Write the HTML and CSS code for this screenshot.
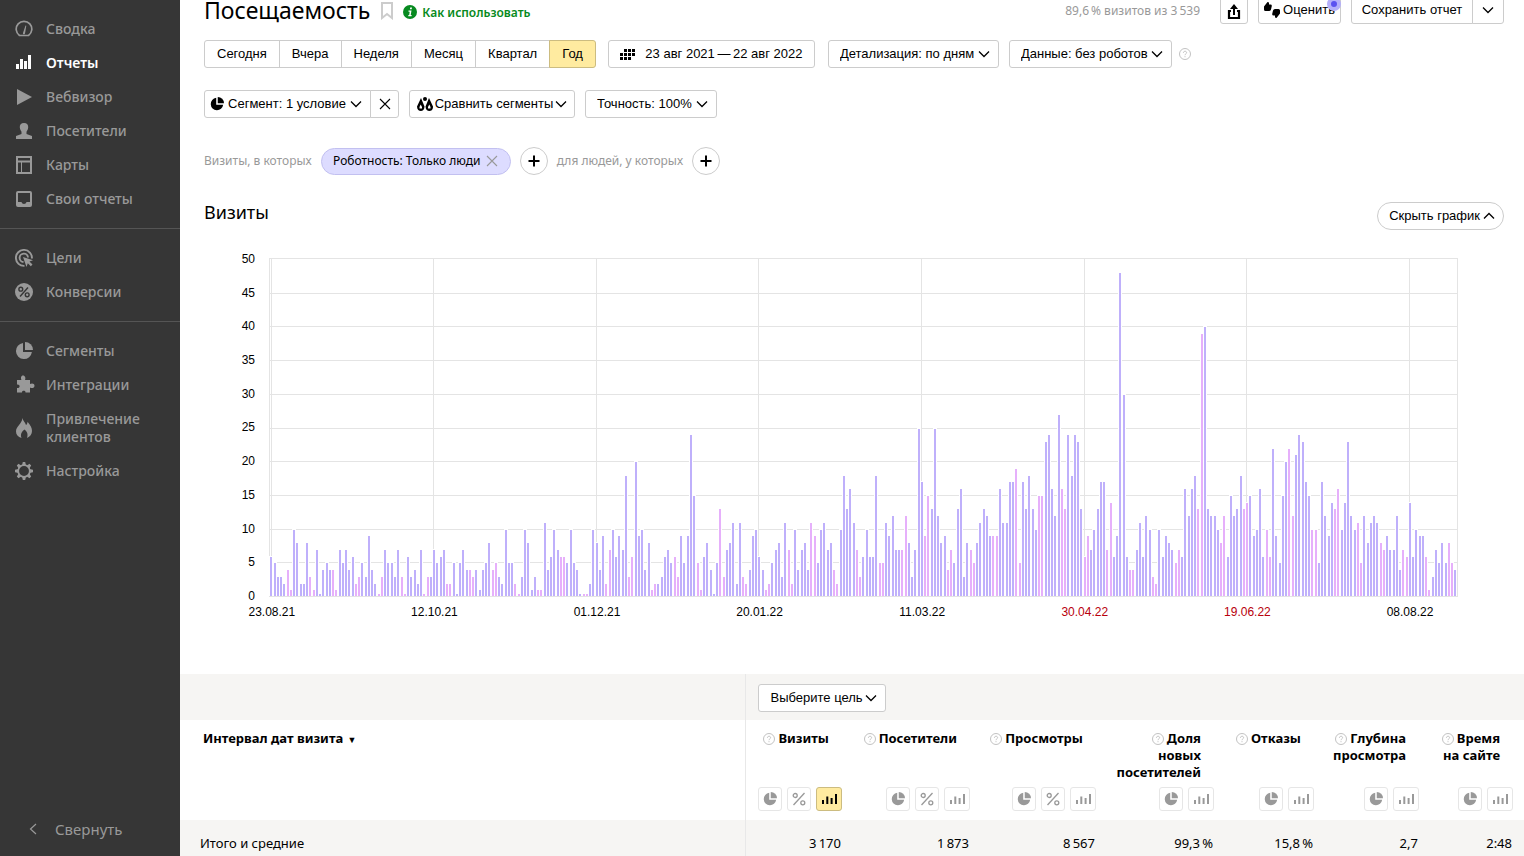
FILE: index.html
```html
<!DOCTYPE html>
<html lang="ru">
<head>
<meta charset="utf-8">
<title>Посещаемость</title>
<link rel="stylesheet" href="styles.css">
</head>
<body>
<svg class="sprite" aria-hidden="true">
  <symbol id="pie" viewBox="0 0 18 18"><path d="M8 1.1V10h8.9A8 8 0 1 1 8 1.1z"/><path d="M10 0a8 8 0 0 1 8 8h-8z"/></symbol>
  <symbol id="bars" viewBox="0 0 16 12"><path d="M1 7h2v4H1zM5.300 3.500h2V11h-2zM9.600 5h2v6h-2zM14 1h2v10h-2z"/></symbol>
  <symbol id="percent" viewBox="0 0 14 14"><g fill="none" stroke="currentColor" stroke-width="1.3"><circle cx="3.200" cy="3.500" r="2"/><circle cx="10.800" cy="10.800" r="2"/><path d="M12.500 1 1.500 13"/></g></symbol>
  <symbol id="down" viewBox="0 0 12 8"><path d="M1 1.500 6 6.500 11 1.500" fill="none" stroke="currentColor" stroke-width="1.300"/></symbol>
  <symbol id="help" viewBox="0 0 12 12"><circle cx="6" cy="6" r="5.500" fill="none" stroke="currentColor" stroke-width=".9"/><path d="M4.400 4.800C4.400 2.700 7.600 2.700 7.600 4.700 7.600 5.800 6 5.900 6 7.200M6 8.200v1" fill="none" stroke="currentColor" stroke-width=".9"/></symbol>
  <symbol id="cross" viewBox="0 0 12 12"><path d="M1 1l10 10M11 1 1 11" fill="none" stroke="currentColor" stroke-width="1.100"/></symbol>
  <symbol id="plus" viewBox="0 0 12 12"><path d="M6 .5v11M.5 6h11" fill="none" stroke="currentColor" stroke-width="2"/></symbol>
</svg>
<div class="app">
  <nav class="sidebar">
    <ul class="menu">
      <li><a href="#"><svg class="mi" viewBox="0 0 18 18"><path d="M4.500 15.500A7.800 7.800 0 1 1 13.500 15.500z" fill="none" stroke="currentColor" stroke-width="1.700" stroke-linejoin="round"/><path d="M10.500 5.500 11.300 5.700 10 13.500C9.500 15 7.500 14.500 8 13z"/></svg>Сводка</a></li>
      <li><a href="#" class="active"><svg class="mi" viewBox="0 0 18 18"><path d="M1 10h3v5H1zM5 5h3v10H5zM9 7h3v8H9zM13 1h3v14h-3z"/></svg>Отчеты</a></li>
      <li><a href="#"><svg class="mi" viewBox="0 0 18 18"><path d="M2 1l15 8-15 8z"/></svg>Вебвизор</a></li>
      <li><a href="#"><svg class="mi" viewBox="0 0 18 18"><path d="M9 1c3 0 4.500 2 4.200 4.500-.2 2-1.200 3.500-1.700 4.200V12l5.500 2v3H1v-3l5.500-2V9.700C6 9 5 7.500 4.800 5.500 4.500 3 6 1 9 1z"/></svg>Посетители</a></li>
      <li><a href="#"><svg class="mi" viewBox="0 0 18 18"><path d="M2 1h14v16H2zM2 5.500h14" fill="none" stroke="currentColor" stroke-width="2"/><path d="M6.500 6v11" fill="none" stroke="currentColor"/></svg>Карты</a></li>
      <li><a href="#"><svg class="mi" viewBox="0 0 18 18"><path fill-rule="evenodd" d="M3 1h12a2 2 0 0 1 2 2v12a2 2 0 0 1-2 2H3a2 2 0 0 1-2-2V3a2 2 0 0 1 2-2zm0 2v9h3.500c.5 2.500 4.500 2.500 5 0H15V3z"/></svg>Свои отчеты</a></li>
    </ul>
    <ul class="menu">
      <li><a href="#"><svg class="mi" viewBox="0 0 18 18"><g fill="none" stroke="currentColor" stroke-width="1.900"><path d="M9.500 16.900A8 8 0 1 1 16.900 9.500"/><path d="M8.500 13A4.200 4.200 0 1 1 13 8.500"/></g><path d="M8 8l10 3.300-3.500 1.200 3 3-1.700 1.700-3-3L11.500 18z"/></svg>Цели</a></li>
      <li><a href="#"><svg class="mi" viewBox="0 0 18 18"><circle cx="9" cy="9" r="9"/><g fill="none" stroke="#363636" stroke-width="1.400"><circle cx="5.800" cy="6.200" r="1.900"/><circle cx="12.200" cy="11.800" r="1.900"/><path d="M13 4.500 5 13.500"/></g></svg>Конверсии</a></li>
    </ul>
    <ul class="menu">
      <li><a href="#"><svg class="mi"><use href="#pie"/></svg>Сегменты</a></li>
      <li><a href="#"><svg class="mi mi-puzzle" viewBox="-1 1 18 18"><path d="M1 5h4.500C4.500 3 5 0.500 7 0.500s3 2.500 2 4.500H14v4c1.500-1 4.500-1 4.500 1.700s-3 2.800-4.500 1.800V17.500H9.500c.5-2.500-4-2.500-3.500 0H1V13c3.500.5 3.500-4 0-3.500z"/></svg>Интеграции</a></li>
      <li><a href="#"><svg class="mi mi-fire" viewBox="0 0 18 20"><path d="M7.500 0c.5 3 2.500 4 3.500 7 1-.8 1.500-2 1.500-3.300C15.500 7 17 10 17 13c0 3.500-2 5.500-5 7 1-3 .8-6-2.500-8.500C7 13.500 5 16 6.500 20 3 19 1 16.500 1 13.500 1 8 7 6 7.500 0z"/></svg>Привлечение клиентов</a></li>
      <li><a href="#"><svg class="mi" viewBox="0 0 18 18"><circle cx="9" cy="9" r="5.800" fill="none" stroke="currentColor" stroke-width="1.700"/><path d="M7.800 0h2.400l.8 3.500H7zM7.800 18h2.400l.8-3.500H7zM0 7.800v2.400l3.500.8V7zM18 7.800v2.400l-3.500.8V7zM1.800 3.500l1.700-1.700 3 1.900-2.800 2.800zM16.200 3.500l-1.700-1.700-3 1.900 2.800 2.800zM1.800 14.500l1.700 1.700 3-1.900-2.800-2.800zM16.200 14.500l-1.700 1.700-3-1.900 2.800-2.800z"/></svg>Настройка</a></li>
    </ul>
    <button class="collapse" type="button"><svg width="8" height="12" viewBox="0 0 8 12"><path d="M7 1 1.500 6 7 11" fill="none" stroke="currentColor" stroke-width="1.200"/></svg>Свернуть</button>
  </nav>

  <main class="content">
    <header class="head">
      <h1>Посещаемость</h1>
      <button class="bookmark" type="button" aria-label="В избранное"><svg width="12" height="18" viewBox="0 0 12 18"><path d="M1 1h10v15L6 12 1 16z" fill="none" stroke="currentColor" stroke-width="2"/></svg></button>
      <a class="howto" href="#"><svg width="14" height="14" viewBox="0 0 14 14"><circle cx="7" cy="7" r="7"/><path d="M7.200 2.500h1.800l-.3 1.700H6.900zM5.500 5.500h3L7.700 10h1l-.2 1.300H5.200l.2-1.300h.8l.5-3.200h-1.200z" fill="#fff"/></svg>Как использовать</a>
      <span class="share-of">89,6&#8201;% визитов из 3&#8201;539</span>
      <div class="head-actions">
        <button class="btn icon-btn" type="button" aria-label="Экспорт"><svg width="14" height="16" viewBox="0 0 14 16"><path d="M4 7H2v7h10V7h-2" fill="none" stroke="currentColor" stroke-width="2.200"/><path d="M6 11h2V5h3L7 0 3 5h3z"/></svg></button>
        <button class="btn rate" type="button"><svg width="16" height="16" viewBox="0 0 16 16"><path d="M0 4.500 3.500 0 5 .5V2.500h1.500q1.500 0 1.300 1.500L7 7.500Q6.500 9 5 9H1.500Q0 9 0 7.500zM16 11.500 12.500 16 11 15.500V13.500H9.500Q8 13.500 8.200 12L9 8.500Q9.500 7 11 7h3.500Q16 7 16 8.500z"/></svg>Оценить<span class="dot"></span></button>
        <div class="group"><button class="btn save" type="button">Сохранить отчет</button><button class="btn more" type="button" aria-label="Ещё"><svg width="12" height="8"><use href="#down"/></svg></button></div>
      </div>
    </header>

    <div class="filters">
      <div class="group">
        <button class="btn" type="button">Сегодня</button><button class="btn" type="button">Вчера</button><button class="btn" type="button">Неделя</button><button class="btn" type="button">Месяц</button><button class="btn" type="button">Квартал</button><button class="btn on" type="button">Год</button>
      </div>
      <button class="btn date" type="button"><svg width="15" height="11" viewBox="0 0 15 11"><path d="M4 0h3v3H4zM8 0h3v3H8zM12 0h3v3h-3zM0 4h3v3H0zM4 4h3v3H4zM8 4h3v3H8zM12 4h3v3h-3zM0 8h3v3H0zM4 8h3v3H4zM8 8h3v3H8z"/></svg>23 авг 2021&#8201;—&#8201;22 авг 2022</button>
      <select class="btn select detail" aria-label="Детализация"><option>Детализация: по дням</option></select>
      <select class="btn select robots" aria-label="Данные"><option>Данные: без роботов</option></select>
      <svg class="help"><use href="#help"/></svg>
    </div>

    <div class="filters segments">
      <div class="group">
        <button class="btn segment" type="button"><svg width="14" height="14"><use href="#pie"/></svg>Сегмент: 1 условие<svg width="12" height="8"><use href="#down"/></svg></button><button class="btn clear" type="button" aria-label="Сбросить"><svg width="12" height="12"><use href="#cross"/></svg></button>
      </div>
      <button class="btn compare" type="button"><svg width="16" height="14" viewBox="0 0 16 14"><path d="M8 0a2 2 0 1 1 0 4 2 2 0 0 1 0-4z"/><path fill-rule="evenodd" d="M4 1 7.500 9.500c.3 6-7.500 6-7.500 0zm-.3 6.500L2.500 10v1.500h2.500V10zM12 1l4 8.500c.3 6-7.500 6-7.500 0zm.3 6.500L11 10v1.500h2.500V10z"/></svg>Сравнить сегменты<svg width="12" height="8"><use href="#down"/></svg></button>
      <select class="btn select accuracy" aria-label="Точность"><option>Точность: 100%</option></select>
    </div>

    <div class="conditions">
      <span>Визиты, в которых</span>
      <button class="chip" type="button">Роботность: Только люди<svg width="12" height="12"><use href="#cross"/></svg></button>
      <button class="add" type="button" aria-label="Добавить условие визита"><svg width="12" height="12"><use href="#plus"/></svg></button>
      <span>для людей, у которых</span>
      <button class="add" type="button" aria-label="Добавить условие для людей"><svg width="12" height="12"><use href="#plus"/></svg></button>
    </div>

    <section class="chart-section">
      <div class="chart-head">
        <h2>Визиты</h2>
        <button class="btn hide" type="button">Скрыть график<svg class="up" width="12" height="8"><use href="#down"/></svg></button>
      </div>
      <div class="chart">
        <ul class="y-axis"><li>50</li><li>45</li><li>40</li><li>35</li><li>30</li><li>25</li><li>20</li><li>15</li><li>10</li><li>5</li><li>0</li></ul>
        <div class="plot-col">
          <svg class="plot" id="plot" viewBox="0 0 1189 339" preserveAspectRatio="none" role="img" aria-label="Визиты по дням"></svg>
          <ul class="x-axis"><li>23.08.21</li><li>12.10.21</li><li>01.12.21</li><li>20.01.22</li><li>11.03.22</li><li class="holiday">30.04.22</li><li class="holiday">19.06.22</li><li>08.08.22</li></ul>
        </div>
      </div>
    </section>

    <table class="report">
      <colgroup><col><col class="c1"><col class="c2"><col class="c3"><col class="c4"><col class="c5"><col class="c6"><col class="c7"></colgroup>
      <thead>
        <tr class="goal-row"><td></td><td colspan="7"><select class="btn select goal" aria-label="Цель"><option>Выберите цель</option></select></td></tr>
        <tr class="names">
          <th scope="col" class="first">Интервал дат визита <span class="sort">▼</span></th>
          <th scope="col"><div class="label"><svg class="help"><use href="#help"/></svg>Визиты</div></th>
          <th scope="col"><div class="label"><svg class="help"><use href="#help"/></svg>Посетители</div></th>
          <th scope="col"><div class="label"><svg class="help"><use href="#help"/></svg>Просмотры</div></th>
          <th scope="col"><div class="label"><svg class="help"><use href="#help"/></svg>Доля<br>новых<br>посетителей</div></th>
          <th scope="col"><div class="label"><svg class="help"><use href="#help"/></svg>Отказы</div></th>
          <th scope="col"><div class="label"><svg class="help"><use href="#help"/></svg>Глубина<br>просмотра</div></th>
          <th scope="col"><div class="label"><svg class="help"><use href="#help"/></svg>Время<br>на сайте</div></th>
        </tr>
        <tr class="modes">
          <td></td>
          <td><div><button type="button" aria-label="Доли"><svg class="pie"><use href="#pie"/></svg></button><button type="button" aria-label="Проценты"><svg class="pct"><use href="#percent"/></svg></button><button type="button" class="wide on" aria-label="График"><svg class="brs"><use href="#bars"/></svg></button></div></td>
          <td><div><button type="button" aria-label="Доли"><svg class="pie"><use href="#pie"/></svg></button><button type="button" aria-label="Проценты"><svg class="pct"><use href="#percent"/></svg></button><button type="button" class="wide" aria-label="График"><svg class="brs"><use href="#bars"/></svg></button></div></td>
          <td><div><button type="button" aria-label="Доли"><svg class="pie"><use href="#pie"/></svg></button><button type="button" aria-label="Проценты"><svg class="pct"><use href="#percent"/></svg></button><button type="button" class="wide" aria-label="График"><svg class="brs"><use href="#bars"/></svg></button></div></td>
          <td><div><button type="button" aria-label="Доли"><svg class="pie"><use href="#pie"/></svg></button><button type="button" class="wide" aria-label="График"><svg class="brs"><use href="#bars"/></svg></button></div></td>
          <td><div><button type="button" aria-label="Доли"><svg class="pie"><use href="#pie"/></svg></button><button type="button" class="wide" aria-label="График"><svg class="brs"><use href="#bars"/></svg></button></div></td>
          <td><div><button type="button" aria-label="Доли"><svg class="pie"><use href="#pie"/></svg></button><button type="button" class="wide" aria-label="График"><svg class="brs"><use href="#bars"/></svg></button></div></td>
          <td><div><button type="button" aria-label="Доли"><svg class="pie"><use href="#pie"/></svg></button><button type="button" class="wide" aria-label="График"><svg class="brs"><use href="#bars"/></svg></button></div></td>
        </tr>
      </thead>
      <tbody>
        <tr class="total"><td>Итого и средние</td><td>3&#8201;170</td><td>1&#8201;873</td><td>8&#8201;567</td><td>99,3&#8201;%</td><td>15,8&#8201;%</td><td>2,7</td><td>2:48</td></tr>
      </tbody>
    </table>
  </main>
</div>
<script src="chart.js"></script>
</body>
</html>
```
FILE: styles.css
```css
* { box-sizing: border-box; }
body { margin: 0; font-family: "Noto Sans", "Open Sans", sans-serif; font-size: 13px; color: #000; background: #fff; }
button, select { font-family: "Liberation Sans", Arial, sans-serif; font-size: 13px; color: #000; margin: 0; }
ul { list-style: none; margin: 0; padding: 0; }
svg { fill: currentColor; flex: none; }
.sprite { position: absolute; width: 0; height: 0; }
.app { display: flex; height: 100vh; overflow: hidden; }

.sidebar { width: 180px; flex: none; background: #363636; display: flex; flex-direction: column; padding-top: 12px; }
.menu { padding-bottom: 12px; }
.menu + .menu { border-top: 1px solid #555; padding-top: 12px; }
.menu a { display: flex; align-items: center; gap: 13px; min-height: 34px; padding: 8px 15px; font-size: 14px; font-weight: 500; line-height: 18px; color: #999; text-decoration: none; }
.menu a.active { color: #fff; font-weight: 600; }
.mi { width: 18px; height: 18px; }
.mi-puzzle { overflow: visible; }
.mi-fire { height: 20px; }
.collapse { display: flex; align-items: center; gap: 18px; margin: auto 0 0; padding: 16px 29px 17px; border: 0; background: none; color: #999; font: 15px/20px "Noto Sans", sans-serif; }

.content { flex: 1; min-width: 0; display: flex; flex-direction: column; }
.head { display: flex; align-items: center; margin-top: -4px; padding: 0 20px 0 24px; height: 28px; }
h1 { margin: 0; font-size: 23px; font-weight: 400; line-height: 28px; }
.bookmark { border: 0; background: none; padding: 4px 0 0; margin-left: 11px; color: #ccc; height: 24px; }
.howto { display: flex; align-items: center; gap: 5px; margin-left: 10px; padding-top: 4px; color: #078a20; font-size: 12px; font-weight: 600; text-decoration: none; }
.share-of { margin-left: auto; color: #999; font-size: 12px; }
.head-actions { display: flex; gap: 10px; margin-left: 20px; }

.btn { display: inline-flex; align-items: center; justify-content: center; gap: 4px; height: 28px; padding: 0 12px; border: 1px solid #ccc; border-radius: 3px; background: #fff; line-height: 16px; white-space: nowrap; }
.group { display: flex; }
.group .btn { border-radius: 0; margin-left: -1px; }
.group .btn:first-child { border-radius: 3px 0 0 3px; margin-left: 0; }
.group .btn:last-child { border-radius: 0 3px 3px 0; }
.btn.on { background: #ffeba0; border-color: #ccbc80; }
.icon-btn { width: 28px; padding: 4px 0 0; }
.rate { position: relative; width: 83px; padding: 0; gap: 3px; }
.dot { position: absolute; right: -1px; top: 0; width: 14px; height: 14px; border-radius: 50%; background: #5b52f0; border: 4px solid #b5b0fa; }
.more { width: 32px; padding: 0; }
.save { width: 122px; padding: 0; }
.select { appearance: none; padding: 0 20px 0 11px; background: #fff url("data:image/svg+xml,%3Csvg xmlns='http://www.w3.org/2000/svg' width='12' height='8'%3E%3Cpath d='M1 1.500 6 6.500 11 1.500' fill='none' stroke='%23000' stroke-width='1.300'/%3E%3C/svg%3E") no-repeat right 8px center; }

.filters { display: flex; padding: 16px 20px 0 24px; }
.date { width: 207px; margin-left: 12px; gap: 10px; }
.detail { width: 171px; margin-left: 13px; }
.robots { width: 163px; margin-left: 10px; }
.help { width: 12px; height: 12px; color: #bbb; }
.filters .help { align-self: center; margin-left: 7px; }
.segments { padding-top: 22px; gap: 10px; }
.segment { padding: 0 9px 0 6px; width: 167px; }
.clear { width: 29px; padding: 0; }
.compare { width: 166px; padding: 0 6px; gap: 2px; }
.accuracy { width: 132px; }

.conditions { display: flex; align-items: center; gap: 9px; padding: 29px 20px 0 24px; color: #999; font-size: 12px; line-height: 16px; }
.chip { display: flex; align-items: center; justify-content: center; gap: 6px; width: 190px; height: 27px; padding: 0; border: 1px solid #c2c0f0; border-radius: 14px; background: #dddcff; font: 12px/16px "Noto Sans", sans-serif; white-space: nowrap; }
.chip svg { color: #999; }
.add { display: flex; align-items: center; justify-content: center; width: 28px; height: 28px; padding: 0; border: 1px solid #ccc; border-radius: 50%; background: #fff; }

.chart-head { display: flex; justify-content: space-between; align-items: flex-end; padding: 25px 20px 0 24px; }
h2 { margin: 0; padding-bottom: 6px; font-size: 18px; font-weight: 400; line-height: 24px; }
.hide { border-radius: 14px; padding: 0 8px 0 11px; gap: 3px; }
.up { transform: scaleY(-1); }
.chart { display: flex; padding: 20px 66px 0 54px; font: 12px/18px "Liberation Sans", Arial, sans-serif; }
.y-axis { width: 21px; height: 355px; margin-right: 14px; display: flex; flex-direction: column; justify-content: space-between; text-align: right; }
.plot-col { flex: 1; min-width: 0; padding-top: 8px; }
.plot { display: block; width: 100%; height: 339px; }
.x-axis { display: grid; grid-template-columns: repeat(8, 1fr); width: 109.400%; margin: 6px 0 0 -6.600%; text-align: center; }
.holiday { color: #b8000c; }

.report { width: 100%; margin-top: 53px; border-collapse: collapse; table-layout: fixed; }
.report td, .report th { padding: 0 11px 0 0; text-align: right; vertical-align: top; }
.report tr > :first-child { text-align: left; border-right: 1px solid #e8e8e8; }
.c1 { width: 107px; } .c2 { width: 128px; } .c3 { width: 126px; } .c4 { width: 118px; } .c5 { width: 100px; } .c6 { width: 105px; } .c7 { width: 94px; }
.goal-row { height: 46px; background: #f6f5f3; }
.report .goal-row td { padding: 10px 12px 0; text-align: left; }
.goal { width: 128px; }
.names { height: 66px; }
.report .names th { padding: 10px 24px 0 0; font-size: 13px; font-weight: 700; line-height: 17px; white-space: nowrap; }
.report .names .first { padding-left: 23px; }
.sort { font-size: 9px; margin-left: 1px; }
.label .help { margin-right: 3px; vertical-align: -2px; }
.modes { height: 34px; }
.modes div { display: flex; justify-content: flex-end; gap: 5px; padding-top: 1px; }
.modes button { display: flex; align-items: center; justify-content: center; width: 24px; height: 24px; padding: 0; border: 1px solid #e6e6e6; border-radius: 3px; background: #fff; color: #999; }
.modes .wide { width: 26px; }
.modes .on { background: #ffeba0; border-color: #ccbc80; color: #000; }
.pie { width: 14px; height: 14px; }
.pct { width: 14px; height: 14px; }
.brs { width: 16px; height: 12px; }
.total { height: 46px; background: #f6f5f3; line-height: 18px; }
.report .total td { padding: 14px 12px 14px 0; }
.report .total td:first-child { padding-left: 20px; }
```
FILE: chart.js
```js
// Daily visits, one row per week, Monday to Sunday.
const weeks = [
  "6 5 3 3 2 4 1", "10 8 2 2 8 3 1", "7 0 4 5 4 4 1", "7 5 7 4 6 2 3", "5 3 9 4 2 0 3",
  "7 5 5 3 7 3 0", "6 3 4 2 7 0 3", "3 7 5 6 7 2 2", "5 0 5 7 4 4 3", "4 1 4 5 8 4 5",
  "3 2 10 5 5 2 0", "3 10 8 1 3 1 1", "11 4 6 10 7 6 6", "5 10 5 4 0 0 0", "2 10 8 4 9 2 7",
  "10 6 9 7 18 3 6", "20 9 10 4 8 1 2", "2 3 6 7 5 6 3", "9 5 9 24 15 5 1", "6 8 4 0 5 13 3",
  "7 8 11 2 11 3 2", "4 9 10 6 4 1 2", "5 7 8 3 11 7 2", "10 4 7 8 4 11 9", "5 10 11 7 8 4 2",
  "10 18 13 16 11 7 3", "6 10 6 6 18 5 5", "11 9 12 7 7 7 12", "8 3 7 25 17 9 15", "13 25 12 8 9 4 7",
  "5 13 16 3 8 7 5", "8 11 13 12 9 9 9", "16 11 11 17 17 19 5", "17 13 18 13 10 15 15", "23 24 16 12 27 16 13",
  "24 18 24 23 13 6 9", "7 10 13 17 17 7 14", "6 9 48 30 6 4 4", "7 11 6 12 10 3 2", "10 6 9 8 7 5 7",
  "6 16 12 16 18 13 39", "40 13 12 12 10 8 12", "6 15 12 13 18 13 14", "15 9 10 16 6 10 6", "22 9 5 15 20 22 12",
  "21 24 23 17 15 10 10", "5 17 12 9 14 13 16", "10 14 23 12 10 11 5", "12 8 11 12 11 8 7", "9 7 7 12 4 7 6",
  "14 6 10 9 9 6 1", "3 7 5 8 5 8 5", "4"
];
const days = weeks.join(" ").split(" ").map(Number);
const plot = document.getElementById("plot");
const base = 338, unit = 6.74, step = 3.2527;

function rect(x, y, width, height, fill) {
  const r = document.createElementNS("http://www.w3.org/2000/svg", "rect");
  Object.entries({ x, y, width, height, fill, "shape-rendering": "crispEdges" })
    .forEach(([name, value]) => r.setAttribute(name, value));
  plot.appendChild(r);
}

for (let v = 0; v <= 50; v += 5) rect(0, v === 50 ? 0 : Math.round(base - v * unit), 1189, 1, "#e4e4e4");
rect(0, 0, 1, 339, "#e4e4e4");
rect(1188, 0, 1, 339, "#e4e4e4");
for (let i = 0; i < days.length; i += 50) rect(Math.max(2, Math.round(1.4 + step * i)), 0, 1, 339, "#e4e4e4");

const bars = days.map((v, i) => ({
  x: Math.round(1.4 + step * i),
  y: v ? Math.round(base + 1 - v * unit) : base - 2,
  color: i % 7 > 4 ? "#e6b0fb" : "#bfb0fb"
}));
bars.forEach(b => rect(b.x - 1, b.y - 1, 4, base - b.y + 1, "#fff"));
bars.forEach(b => rect(b.x, b.y, 2, base - b.y, b.color));
```
